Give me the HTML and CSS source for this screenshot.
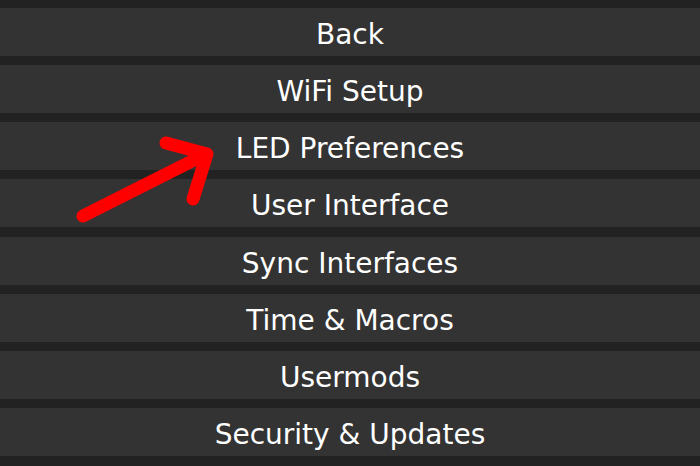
FILE: index.html
```html
<!DOCTYPE html>
<html>
<head>
<meta charset="utf-8">
<link rel="stylesheet" href="styles.css">
</head>
<body>
<div class="menu">
  <button class="btn">Back</button>
  <button class="btn">WiFi Setup</button>
  <button class="btn">LED Preferences</button>
  <button class="btn">User Interface</button>
  <button class="btn">Sync Interfaces</button>
  <button class="btn">Time &amp; Macros</button>
  <button class="btn">Usermods</button>
  <button class="btn">Security &amp; Updates</button>
</div>
<svg class="arrow" width="700" height="466" viewBox="0 0 700 466">
  <g stroke="#ff0000" stroke-width="13" stroke-linecap="round" stroke-linejoin="round" fill="none">
    <path d="M83 216 L206 154"/>
    <path d="M166 143 L207 154 L193 199"/>
  </g>
</svg>
</body>
</html>
```
FILE: styles.css
```css
html, body {
  margin: 0;
  padding: 0;
  background: #222222;
  width: 700px;
  height: 466px;
  overflow: hidden;
}
body {
  position: relative;
  font-family: Verdana, "DejaVu Sans", sans-serif;
}
.menu {
  display: flex;
  flex-direction: column;
  gap: 9.143px;
  padding-top: 8px;
}
.btn {
  display: block;
  box-sizing: border-box;
  width: 100%;
  height: 48px;
  margin: 0;
  padding: 6px 0 0 0;
  border: none;
  background: #333333;
  color: #ffffff;
  font-family: Verdana, "DejaVu Sans", sans-serif;
  font-size: 28px;
  line-height: 42px;
  text-align: center;
}
.arrow {
  position: absolute;
  left: 0;
  top: 0;
  pointer-events: none;
}
```
